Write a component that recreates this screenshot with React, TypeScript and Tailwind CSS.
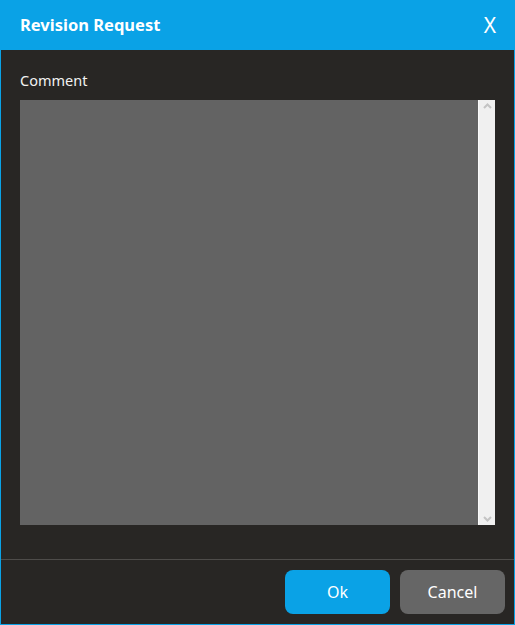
export default function App() {
  return (
    <div
      className="w-[515px] h-[625px] flex flex-col bg-[#282624] border-x border-b border-[#0aa2e6] text-white"
      style={{ fontFamily: '"Noto Sans", "Open Sans", sans-serif' }}
    >
      {/* Header */}
      <div className="h-[50px] shrink-0 -mx-px bg-[#0aa2e6] flex items-center justify-between pl-[20px] pr-[19px]">
        <span className="text-[16.5px] font-bold leading-none">Revision Request</span>
        <button className="text-[21px] leading-none font-normal">X</button>
      </div>

      {/* Body */}
      <div className="flex flex-col pl-[19px] pr-[19px] pt-[20px] pb-[34px]">
        <label className="h-[20px] text-[14.5px] leading-[20px] text-[#f2f2f2]">Comment</label>
        <div className="mt-[10px] h-[425px] flex">
          <textarea className="flex-1 bg-[#636363] resize-none outline-none overflow-hidden p-1 text-white text-sm" />
          <div className="w-[17px] bg-[#f0f0f0] border-l border-[#fafafa] flex flex-col justify-between items-center py-[3px]">
            <svg width="9" height="6" viewBox="0 0 9 6" fill="none" stroke="#c4c4c4" strokeWidth="2">
              <path d="M1 5 L4.5 1.5 L8 5" />
            </svg>
            <svg width="9" height="6" viewBox="0 0 9 6" fill="none" stroke="#c4c4c4" strokeWidth="2">
              <path d="M1 1 L4.5 4.5 L8 1" />
            </svg>
          </div>
        </div>
      </div>

      {/* Footer */}
      <div className="flex-1 border-t border-[#4e4c4a] flex justify-end items-start gap-[10px] pt-[10px] pr-[9px]">
        <button className="w-[105px] h-[44px] rounded-[8px] bg-[#0aa2e6] text-[16px] text-white">Ok</button>
        <button className="w-[105px] h-[44px] rounded-[8px] bg-[#666666] text-[16px] text-white">Cancel</button>
      </div>
    </div>
  );
}
